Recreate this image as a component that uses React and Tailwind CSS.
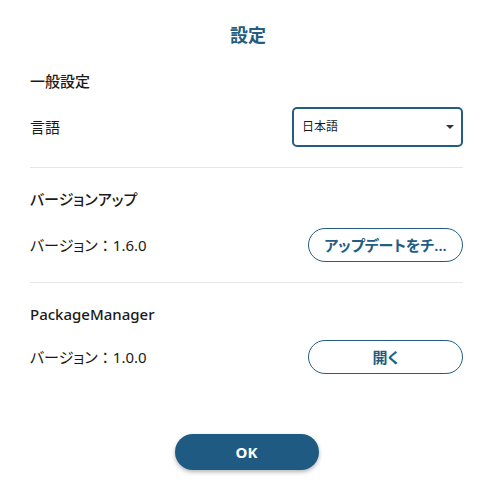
export default function App() {
  return (
    <div
      className="w-[490px] h-[490px] bg-white flex flex-col pl-[30px] pr-[27px] pt-[22px] text-[#1a1a1a] [font-feature-settings:'palt']"
      style={{ fontFamily: '"Noto Sans", "Noto Sans CJK JP", sans-serif' }}
    >
      {/* title */}
      <h1 className="text-center text-[18px] leading-[26px] font-bold text-[#235d82] pl-[3px]">
        設定
      </h1>

      {/* 一般設定 */}
      <div className="mt-[22px] text-[15px] leading-[22px] font-medium">一般設定</div>
      <div className="mt-[15px] flex items-center justify-between">
        <span className="text-[15px]">言語</span>
        <div className="w-[171px] h-[40px] border-2 border-[#235d82] rounded-[5px] flex items-center justify-between pl-[8px] pr-[6px]">
          <span className="text-[12px]">日本語</span>
          <svg width="10" height="6" viewBox="0 0 10 6">
            <path d="M1 1h8L5 5z" fill="#333" />
          </svg>
        </div>
      </div>
      <div className="mt-[20px] h-px bg-[#e6e6e6]" />

      {/* バージョンアップ */}
      <div className="mt-[20px] text-[15px] leading-[22px] font-medium">バージョンアップ</div>
      <div className="mt-[18px] flex items-center justify-between">
        <span className="text-[15px]">
          バージョン<span className="[font-feature-settings:normal]">：</span>1.6.0
        </span>
        <button className="w-[155px] h-[34px] rounded-full border border-[#235d82] text-[#235d82] text-[15px] font-semibold truncate px-3">
          アップデートをチ...
        </button>
      </div>
      <div className="mt-[20px] h-px bg-[#e6e6e6]" />

      {/* PackageManager */}
      <div className="mt-[20px] text-[15px] leading-[22px] font-medium">PackageManager</div>
      <div className="mt-[15px] flex items-center justify-between">
        <span className="text-[15px]">
          バージョン<span className="[font-feature-settings:normal]">：</span>1.0.0
        </span>
        <button className="w-[155px] h-[34px] rounded-full border border-[#235d82] text-[#235d82] text-[15px] font-semibold">
          開く
        </button>
      </div>

      <div className="mt-auto mb-[20px] flex justify-center">
        <button className="w-[144px] h-[36px] rounded-full bg-[#1f5a82] text-white text-[15px] font-bold shadow-[0_2px_4px_rgba(0,0,0,0.3)]">
          OK
        </button>
      </div>
    </div>
  );
}
